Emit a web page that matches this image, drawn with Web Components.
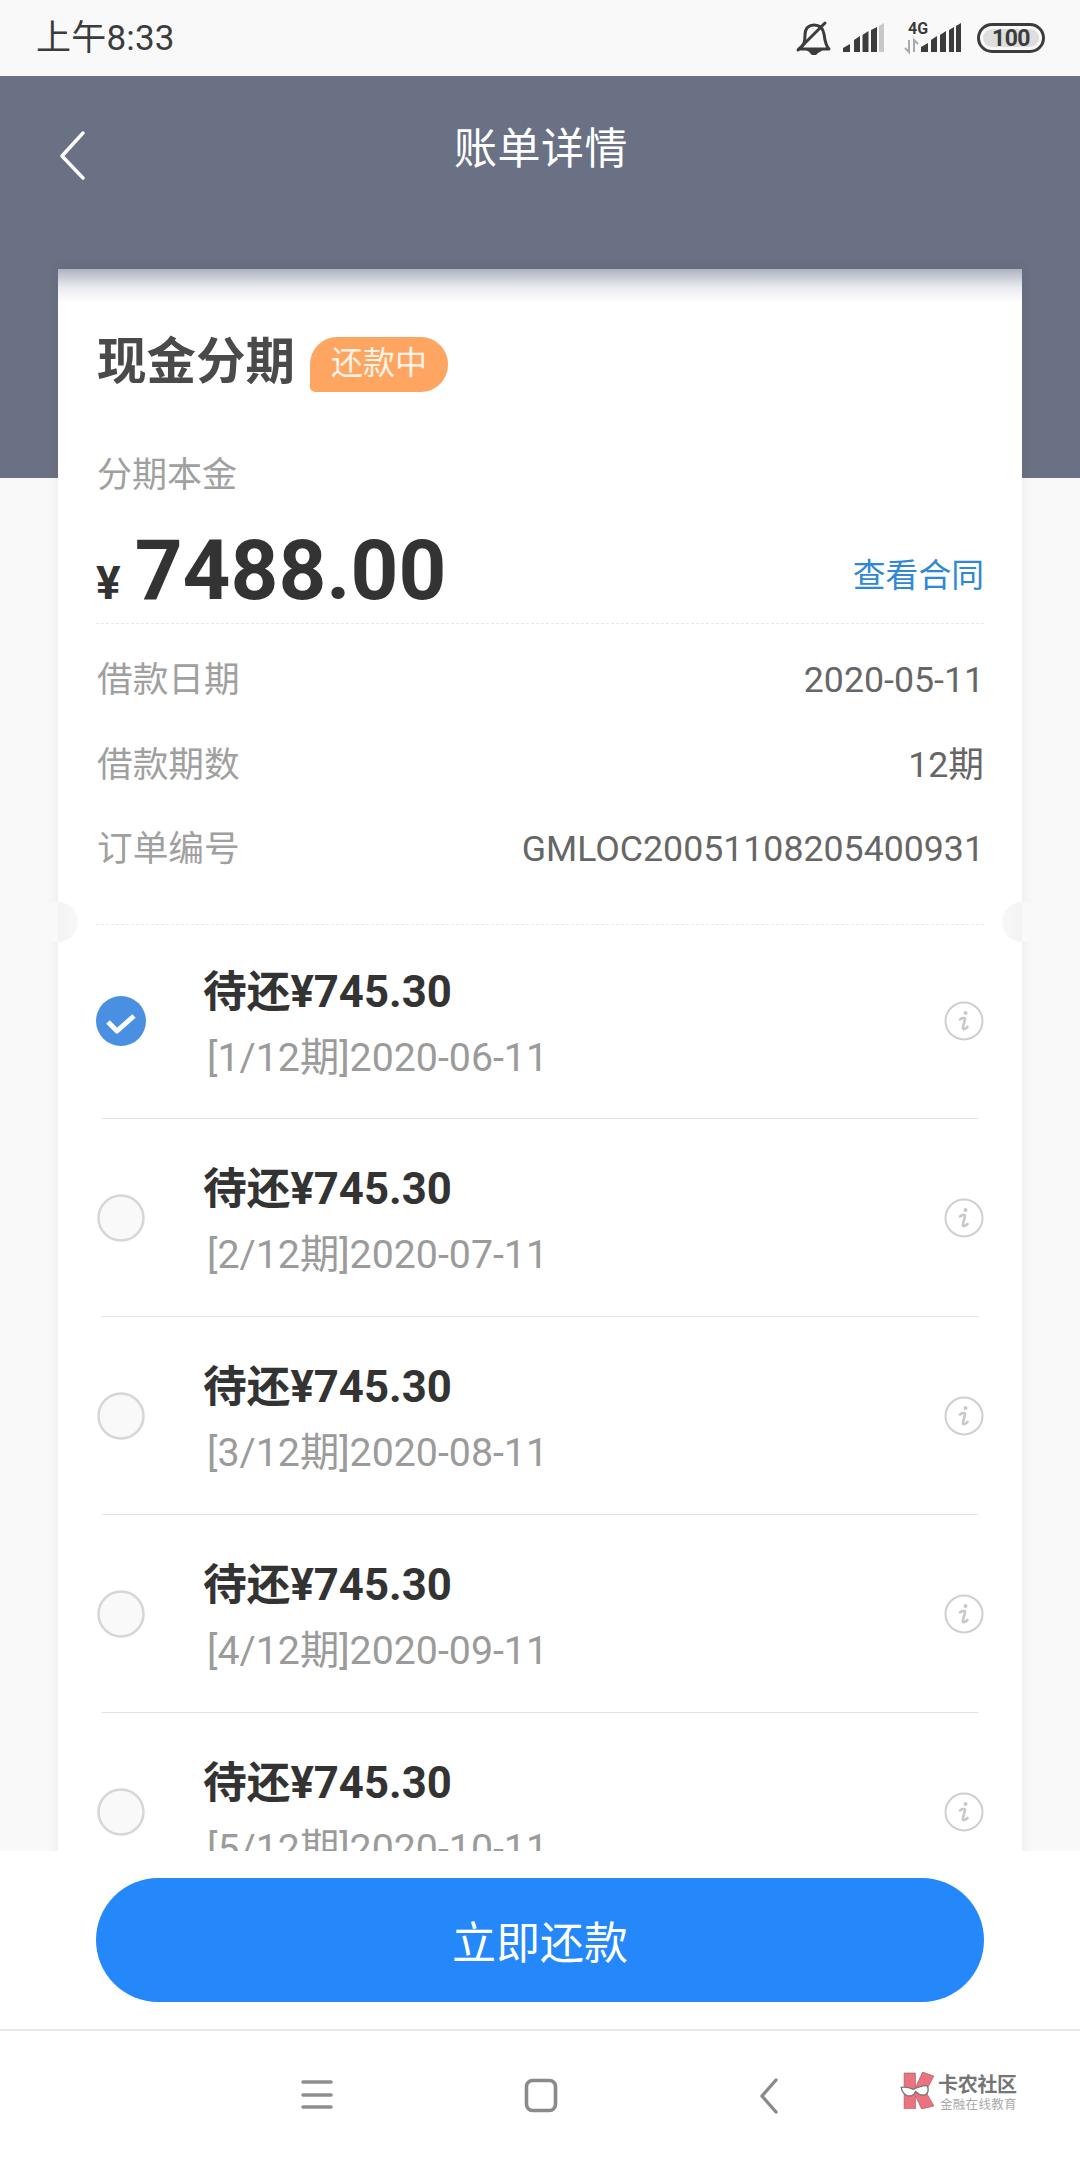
<!DOCTYPE html>
<html lang="zh"><head><meta charset="utf-8">
<style>
html,body{margin:0;padding:0;background:#f9f9f9}
body{width:1080px;height:2160px;overflow:hidden;font-family:Roboto,"Noto Sans CJK SC",sans-serif;display:flex;flex-direction:column}
</style></head><body>
<status-bar></status-bar>
<main-area>
  <title-band>账单详情</title-band>
  <bill-card>
    <span slot="title">现金分期</span>
    <span slot="badge">还款中</span>
    <info-row label="借款日期" value="2020-05-11"></info-row>
    <info-row label="借款期数" value="12期"></info-row>
    <info-row label="订单编号" value="GMLOC20051108205400931"></info-row>
    <bill-item slot="items" first checked amount="待还¥745.30" sub="[1/12期]2020-06-11"></bill-item>
    <bill-item slot="items" amount="待还¥745.30" sub="[2/12期]2020-07-11"></bill-item>
    <bill-item slot="items" amount="待还¥745.30" sub="[3/12期]2020-08-11"></bill-item>
    <bill-item slot="items" amount="待还¥745.30" sub="[4/12期]2020-09-11"></bill-item>
    <bill-item slot="items" amount="待还¥745.30" sub="[5/12期]2020-10-11"></bill-item>
  </bill-card>
</main-area>
<pay-bar>立即还款</pay-bar>
<nav-bar></nav-bar>
<script>
function def(name, html){
  customElements.define(name, class extends HTMLElement{
    connectedCallback(){
      if(this.shadowRoot) return;
      const r=this.attachShadow({mode:'open'});
      r.innerHTML=typeof html==='function'?html(this):html;
    }
  });
}
def('status-bar',`<style>
:host{display:flex;flex:none;height:76px;background:#f9f9f9;align-items:center;padding:0 35px 0 36px;color:#3c3c3c}
.t{font-size:35px;flex:1;line-height:76px;letter-spacing:.2px;padding-top:2px}
svg{display:block}
</style>
<span class="t">上午8:33</span>
<svg width="250" height="76" viewBox="795 0 250 76" fill="none">
<g stroke="#3c3c3c" stroke-width="3" stroke-linecap="round" stroke-linejoin="round">
<path d="M799 49c5-3 6-7 6-14 0-7 4-10 9-10s9 3 10 9c1 8 2 12 5 15z"/>
<path d="M798 50 825 23"/>
</g>
<path d="M806 50h17l-5 3h-7zM809 52h10l-3 3h-4z" fill="#3c3c3c"/>
<g fill="#3c3c3c">
<path d="M843 52v-4l7-4v8zM854 52V40l6-4v16zM862.500 52V35l6-4v21zM871 52V30l6-3v25z"/>
<path d="M879 52V26l5-3v29z" fill="#c8c8c8"/>
<path d="M921 52v-5l7-4v9zM931 52V40l6-4v16zM940 52V35l6-4v21zM949 52V30l5-3v25zM956 52V26l5-3v29z"/>
</g>
<path d="M909 40v12l-4-4M914 52V40l4 4" stroke="#aaa" stroke-width="2"/>
<text x="908" y="34" font-family="Roboto" font-weight="700" font-size="16" fill="#3c3c3c">4G</text>
<rect x="978.500" y="24.500" width="65" height="27" rx="13.500" stroke="#3c3c3c" stroke-width="3"/>
<rect x="983" y="29" width="56" height="18" rx="9" fill="#dedede"/>
<text x="1011" y="46" text-anchor="middle" font-family="Roboto" font-weight="700" font-size="23" fill="#3c3c3c" letter-spacing="-.5">100</text>
</svg>`);
def('main-area',`<style>
:host{display:block;flex:1;min-height:0;overflow:hidden}
</style><slot></slot>`);
def('title-band',`<style>
:host{display:block;height:402px;background:#6a7184;color:#fff}
.bar{display:flex;align-items:center;height:146px;padding-left:57px}
.bar svg{flex:none;display:block;margin-top:12px}
.t{flex:1;text-align:center;font-size:43px;margin:-8px 0 0 -28px;padding-right:57px;font-weight:400;letter-spacing:.5px}
</style>
<div class="bar">
<svg width="30" height="50" viewBox="0 0 30 50" fill="none"><path d="M26 3 5 26l21 22" stroke="#fff" stroke-width="3.400" stroke-linecap="round" stroke-linejoin="round"/></svg>
<div class="t"><slot></slot></div>
</div>`);
def('bill-card',`<style>
:host{display:block;position:relative;margin:-209px 58px 0;background:linear-gradient(#aeb2c2,#e9eaef 18px,#fff 34px);box-shadow:0 0 14px rgba(0,0,0,.07);padding-top:65px}
.head{display:flex;align-items:center;height:56px;padding-left:39px}
.title{font-size:49.500px;font-weight:700;color:#4a4a4a;line-height:56px}
.badge{margin-left:15px;width:138px;height:55px;box-sizing:border-box;background:#ffa562;color:#fff3e6;font-size:32px;line-height:53px;text-align:center;border-radius:27px 27px 27px 5px;margin-top:4px}
.lab{font-size:35px;color:#a0a0a0;line-height:50px;margin:61px 0 0 39px}
.amt{display:flex;align-items:baseline;height:100px;line-height:100px;margin:20px 38px 0 38px;color:#333}
.y{font-size:46px;font-weight:700;margin-right:14px}
.n{font-size:83.500px;font-weight:700;flex:1}
.link{font-size:32.800px;color:#2f87d8;position:relative;top:-12px}
.dash{height:0;border-top:1.500px dashed #e8e8e8;margin:0 38px}
.rows{padding:14px 0 32px}
.notch{position:absolute;width:40px;height:40px;border-radius:50%;top:633px}
.notch.l{left:-20px;background:linear-gradient(90deg,#f9f9f9 50%,#f3f3f3 50%,#f8f8f8)}
.notch.r{right:-20px;background:linear-gradient(270deg,#f9f9f9 50%,#f3f3f3 50%,#f8f8f8)}
</style>
<div class="head"><span class="title"><slot name="title"></slot></span><span class="badge"><slot name="badge"></slot></span></div>
<div class="lab">分期本金</div>
<div class="amt"><span class="y">¥</span><span class="n">7488.00</span><span class="link">查看合同</span></div>
<div class="dash" style="margin-top:2px"></div>
<div class="rows"><slot></slot></div>
<div class="dash"></div>
<i class="notch l"></i><i class="notch r"></i>
<slot name="items"></slot>`);
def('info-row',el=>`<style>
:host{display:flex;justify-content:space-between;align-items:center;height:84.500px;padding:0 38px 0 39px;font-size:35.700px;line-height:50px}
.l{color:#a0a0a0}.v{color:#666}
</style><span class="l">${el.getAttribute('label')}</span><span class="v">${el.getAttribute('value')}</span>`);
def('bill-item',el=>{
 const c=el.hasAttribute('checked');
 const radio=c?`<svg width="50" height="50" viewBox="0 0 50 50"><circle cx="25" cy="25" r="25" fill="#4a90e2"/><path d="M12 26l9 9 17-15" fill="none" stroke="#fff" stroke-width="5" stroke-linejoin="round"/></svg>`
 :`<svg width="50" height="50" viewBox="0 0 50 50"><circle cx="25" cy="25" r="22.500" fill="#f9f9f9" stroke="#d6d6d6" stroke-width="2.500"/></svg>`;
 return `<style>
:host{display:block;height:${el.hasAttribute('first')?'194px':'198px'};padding:0 44px 0 38px}
.in{display:flex;align-items:center;height:100%;box-sizing:border-box;border-bottom:1.500px solid #e2e2e2;margin-left:6px;padding-top:${el.hasAttribute('first')?'0':'2px'}}
.r{width:50px;margin-left:-6px;flex:none}.r svg{display:block}
.tx{flex:1;margin-left:57px;display:flex;flex-direction:column}
.a{font-size:43.700px;font-weight:700;color:#333;line-height:56px;margin-top:4px}
.s{font-size:39.300px;color:#9b9b9b;line-height:50px;margin:13px 0 0 4px}
.i{flex:none;display:block;margin-right:-6px}
</style>
<div class="in"><div class="r">${radio}</div>
<div class="tx"><span class="a">${el.getAttribute('amount')}</span><span class="s">${el.getAttribute('sub')}</span></div>
<svg class="i" width="40" height="40" viewBox="0 0 40 40"><circle cx="20" cy="20" r="18.500" fill="none" stroke="#cfcfcf" stroke-width="2"/><circle cx="21.500" cy="12" r="2" fill="#c8c8c8"/><path d="M16 18.500c2-1.500 4.500-2 5-1 .5 1-2.500 8-2 10 .5 1.500 3 0 4.500-1.500" fill="none" stroke="#c8c8c8" stroke-width="2.600" stroke-linecap="round"/></svg>
</div>`});
def('pay-bar',`<style>
:host{display:block;flex:none;height:180px;box-sizing:border-box;background:#fff;padding:27px 96px 0;border-bottom:2px solid #e8e8e8}
.b{height:124px;border-radius:62px;background:#2488fb;color:#fff;font-size:44px;font-weight:400;display:flex;align-items:center;justify-content:center}
</style><div class="b"><slot></slot></div>`);
def('nav-bar',`<style>
:host{display:flex;flex:none;height:129px;background:#fff;align-items:flex-start;box-sizing:border-box;padding:40px 0 0 301px}
svg{display:block;flex:none}
.logo{display:flex;margin:1px 0 0 121px;align-items:flex-start}
.m{margin-right:3px}
.tx{display:flex;flex-direction:column}
.a{font-size:20px;font-weight:700;color:#757575;line-height:22px;letter-spacing:-.3px;margin-top:2px}
.b{font-size:12.500px;color:#aaa;line-height:16px;letter-spacing:.3px;margin:1px 0 0 2px}
</style>
<svg width="32" height="40" viewBox="0 0 32 40" fill="none"><path d="M2 11h28M2 24h28M2 36h28" stroke="#8e8e8e" stroke-width="3.500" stroke-linecap="round"/></svg>
<svg style="margin-left:190px;margin-top:6px" width="36" height="38" viewBox="0 0 36 38" fill="none"><rect x="3.500" y="3.500" width="29" height="30" rx="6" stroke="#8a8a8a" stroke-width="3.600"/></svg>
<svg style="margin-left:200px;margin-top:6px" width="20" height="38" viewBox="0 0 20 38" fill="none"><path d="M17 3 3 19l14 16" stroke="#8a8a8a" stroke-width="3.400" stroke-linecap="round" stroke-linejoin="round"/></svg>
<div class="logo">
<svg class="m" width="35" height="37" viewBox="0 0 34 36">
<path d="M4 1h11v14l7-15 11 4-8 15 8 14-12 3-6-13v14H4z" fill="#ec7280" stroke="#9a5a60" stroke-width=".6"/>
<path d="M1 15c5-1 8 0 12 2 3-2 7-3 13-4 2 3 2 7-1 9-3 1-7 0-10-3-1 3-4 5-8 4-3-1-5-4-6-8z" fill="#fff" stroke="#777" stroke-width="1.300" stroke-linejoin="round"/>
</svg>
<div class="tx"><span class="a">卡农社区</span><span class="b">金融在线教育</span></div>
</div>`);
</script>
</body></html>
